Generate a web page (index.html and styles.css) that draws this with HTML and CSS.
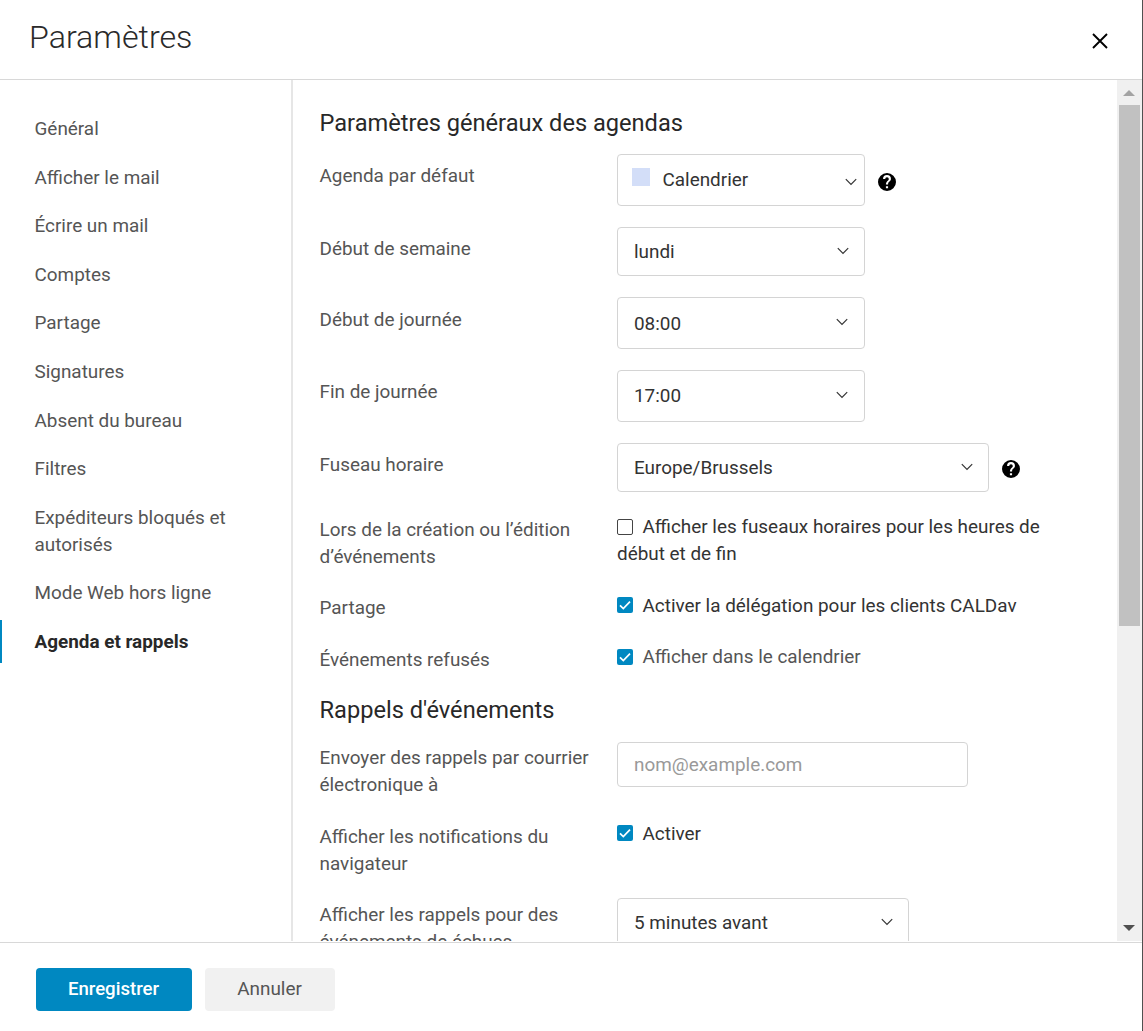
FILE: index.html
```
<!DOCTYPE html>
<html lang="fr">
<head>
    <meta charset="UTF-8">
    <meta name="viewport" content="width=device-width">
    <title>Paramètres</title>
    <link rel="stylesheet" href="styles.css">
</head>
<body>
    <!-- icônes partagées -->
    <svg class="sprite">
        <symbol id="chevron" viewBox="0 0 12 8"><path d="M.8 1.2 6 6.4l5.2-5.2" fill="none" stroke="currentColor" stroke-width="1.2"/></symbol>
        <symbol id="help" viewBox="2 2 20 20"><path d="M12 2a10 10 0 1 0 0 20 10 10 0 0 0 0-20zm1.2 17h-2.4v-2.4h2.4V19zm2.2-8.2-1 1c-.8.8-1.2 1.5-1.2 3h-2.4v-.6c0-1.1.5-2.1 1.2-2.8l1.4-1.4c.4-.4.6-.9.6-1.4a2 2 0 0 0-4 0H7.6a4.4 4.4 0 0 1 8.8 0c0 .9-.4 1.6-1 2.2z" fill="#000"/></symbol>
        <symbol id="check" viewBox="0 0 16 16"><path d="m3 8.3 3.3 3.2L13 4.6" fill="none" stroke="#fff" stroke-width="1.7"/></symbol>
    </svg>
    <section class="modal">
        <header class="header">
            <h1>Paramètres</h1>
            <svg class="close" viewBox="0 0 16 16"><path d="M1 1l14 14M15 1 1 15" stroke="#000" stroke-width="1.9"/></svg>
        </header>
        <div class="main">
            <ul class="nav">
                <li>Général</li>
                <li>Afficher le mail</li>
                <li>Écrire un mail</li>
                <li>Comptes</li>
                <li>Partage</li>
                <li>Signatures</li>
                <li>Absent du bureau</li>
                <li>Filtres</li>
                <li>Expéditeurs bloqués et autorisés</li>
                <li>Mode Web hors ligne</li>
                <li class="active">Agenda et rappels</li>
            </ul>
            <div class="content">
                <h2>Paramètres généraux des agendas</h2>
                <div class="row">
                    <div class="label">Agenda par défaut</div>
                    <div class="field">
                        <div class="select tall calendar"><i class="color"></i><span>Calendrier</span><svg class="chevron"><use href="#chevron"/></svg></div>
                        <svg class="help"><use href="#help"/></svg>
                    </div>
                </div>
                <div class="row short">
                    <div class="label">Début de semaine</div>
                    <div class="select"><span>lundi</span><svg class="chevron"><use href="#chevron"/></svg></div>
                </div>
                <div class="row start">
                    <div class="label">Début de journée</div>
                    <div class="select tall time"><span>08:00</span><svg class="chevron"><use href="#chevron"/></svg></div>
                </div>
                <div class="row end">
                    <div class="label">Fin de journée</div>
                    <div class="select tall time"><span>17:00</span><svg class="chevron"><use href="#chevron"/></svg></div>
                </div>
                <div class="row zone">
                    <div class="label">Fuseau horaire</div>
                    <div class="field">
                        <div class="select wide"><span>Europe/Brussels</span><svg class="chevron"><use href="#chevron"/></svg></div>
                        <svg class="help"><use href="#help"/></svg>
                    </div>
                </div>
                <div class="row text double">
                    <div class="label">Lors de la création ou l’édition d’événements</div>
                    <div class="option"><i class="box"></i>Afficher les fuseaux horaires pour les heures de début et de fin</div>
                </div>
                <div class="row text single tight">
                    <div class="label">Partage</div>
                    <div class="option"><i class="box on raised"><svg><use href="#check"/></svg></i>Activer la délégation pour les clients CALDav</div>
                </div>
                <div class="row text single">
                    <div class="label">Événements refusés</div>
                    <div class="option muted"><i class="box on"><svg><use href="#check"/></svg></i>Afficher dans le calendrier</div>
                </div>
                <h2 class="second">Rappels d'événements</h2>
                <div class="row text tight">
                    <div class="label">Envoyer des rappels par courrier électronique à</div>
                    <input class="email" type="text" placeholder="nom@example.com">
                </div>
                <div class="row text">
                    <div class="label">Afficher les notifications du navigateur</div>
                    <div class="option"><i class="box on raised"><svg><use href="#check"/></svg></i>Activer</div>
                </div>
                <div class="row text">
                    <div class="label">Afficher les rappels pour des événements de échues</div>
                    <div class="select medium"><span>5 minutes avant</span><svg class="chevron"><use href="#chevron"/></svg></div>
                </div>
            </div>
            <div class="scrollbar">
                <i class="up"></i>
                <div class="thumb"></div>
                <i class="down"></i>
            </div>
        </div>
        <footer class="footer">
            <button class="primary">Enregistrer</button>
            <button>Annuler</button>
        </footer>
    </section>
</body>
</html>
```
FILE: styles.css
```
*{ box-sizing:border-box;}
html,body{ height:100%;}
body,ul,h1,h2{ margin:0; padding:0;}
body{
    background:#fff;
    color:#555;
    font:18.9px/27px Roboto, sans-serif;
    overflow:hidden;
}
.sprite{ display:none;}
.modal{
    display:flex;
    flex-direction:column;
    height:1031px;
    width:1143px;
    border-right:1px solid #505050;
}
.header{
    display:flex;
    justify-content:space-between;
    height:80px;
    flex:none;
    padding:15px 34.5px 0 29px;
    border-bottom:1px solid #d8d8d8;
}
.header h1{
    font-size:32.2px;
    line-height:44px;
    font-weight:300;
    color:#2a2a2a;
}
.close{ width:16px; height:16px; margin-top:17.5px;}
.main{
    display:flex;
    height:861px;
    flex:none;
    overflow:hidden;
}

/* menu */
.nav{
    width:293px;
    flex:none;
    padding-top:27.2px;
    border-right:2px solid #e6e6e6;
    list-style:none;
}
.nav li{
    padding:7.8px 40px 7.8px 32.5px;
    margin-bottom:6px;
    border-left:2px solid transparent;
}
.nav .active{
    border-left-color:#0088c1;
    font-weight:bold;
    color:#282828;
}

/* contenu */
.content{ flex:1; padding:27px 0 0 26.5px; min-width:0;}
h2{
    font-size:23.62px;
    line-height:32px;
    font-weight:normal;
    color:#282828;
    height:47px;
}
h2.second{ height:48px;}
.row{
    display:grid;
    grid-template-columns:297.5px 1fr;
    align-items:start;
    height:73px;
}
.row .label{ padding:8px 20px 0 0;}
.row.short{ height:70px;}
.row.zone{ height:70px;}
.row.start .label{ padding-top:9px;}
.row.text{ height:78px;}
.row.text .label{ padding-top:3px;}
.row.tight .label{ padding-top:2px;}
.row.double{ height:79px;}
.row.single{ height:51px;}
.field{ display:flex; align-items:center;}
.select{
    display:flex;
    align-items:center;
    justify-content:space-between;
    width:248px;
    height:49px;
    padding:0 15px 0 16px;
    border:1px solid #d4d4d4;
    border-radius:4px;
    color:#333;
}
.select.tall{ height:52px;}
.select.time{ padding-right:16px;}
.end .select span{ margin-top:-2px;}
.select.calendar{ padding:0 7px 0 14px; justify-content:flex-start;}
.select.calendar span{ margin-top:-2px;}
.select.calendar .chevron{ margin:4px 0 0 auto;}
.select.wide{ width:372px;}
.select.medium{ width:292px;}
.color{ width:18px; height:18px; margin:-6px 12.5px 0 0; background:#d3def8;}
.chevron{ width:12px; height:8px; margin-top:-2px;}
.help{ width:18px; height:18px; margin:4px 0 0 13px;}
.zone .help{ margin-top:3px;}
.option{ color:#333; padding-right:60px;}
.option.muted{ color:#555;}
.box{
    display:inline-block;
    width:16px;
    height:16px;
    margin-right:9.5px;
    vertical-align:-2px;
    border:1px solid #444;
    border-radius:2px;
}
.box.on{ border:0; background:#0088c1;}
.box.raised{ vertical-align:-1px;}
.box svg{ display:block; width:16px; height:16px;}
.email{
    width:351px;
    height:45px;
    padding:0 16px;
    border:1px solid #d4d4d4;
    border-radius:4px;
    font:inherit;
}
.email::placeholder{ color:#999;}

/* barre de défilement */
.scrollbar{
    display:flex;
    flex-direction:column;
    align-items:center;
    width:25px;
    padding:10px 1px 10px 0;
    background:#f0f0f0;
}
.scrollbar i{ border:6px solid transparent;}
.scrollbar .up{ border-top:0; border-bottom-color:#a3a3a3;}
.scrollbar .down{ border-bottom:0; border-top-color:#505050; margin-top:auto;}
.thumb{ width:21px; height:521px; margin-top:9px; background:#c1c1c1;}

.footer{
    display:flex;
    gap:13px;
    flex:1;
    margin-top:1px;
    padding:25px 0 0 35.5px;
    border-top:1px solid #d8d8d8;
}
.footer button{
    width:130px;
    height:43px;
    padding:0 0 2px;
    border:0;
    border-radius:4px;
    background:#f1f1f1;
    color:#555;
    font:inherit;
}
.footer .primary{ width:156px; padding-bottom:1px; background:#0088c1; color:#fff; font-size:18.6px; font-weight:500;}
```
